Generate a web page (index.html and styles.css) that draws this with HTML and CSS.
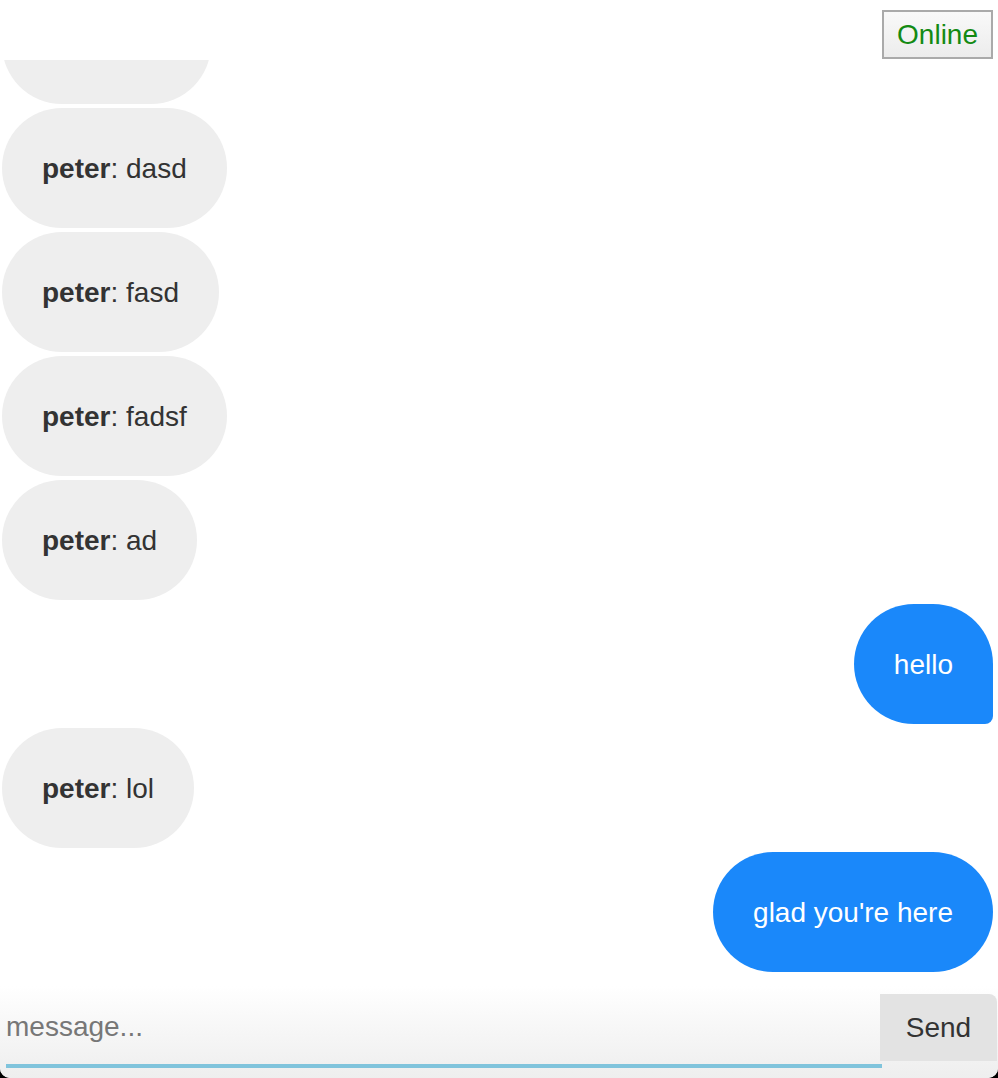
FILE: index.html
```html
<!DOCTYPE html>
<html lang="en">
<head>
<meta charset="utf-8">
<title>Chat</title>
<link rel="stylesheet" href="styles.css">
</head>
<body>
<div class="app">
  <header class="header">
    <div class="status">Online</div>
  </header>
  <main class="messages">
    <div class="msg msg-in"><b>peter</b>: asd</div>
    <div class="msg msg-in"><b>peter</b>: dasd</div>
    <div class="msg msg-in"><b>peter</b>: fasd</div>
    <div class="msg msg-in"><b>peter</b>: fadsf</div>
    <div class="msg msg-in"><b>peter</b>: ad</div>
    <div class="msg msg-out msg-tail">hello</div>
    <div class="msg msg-in"><b>peter</b>: lol</div>
    <div class="msg msg-out">glad you're here</div>
  </main>
  <footer class="composer">
    <input class="composer-input" type="text" placeholder="message...">
    <button class="composer-send" type="button">Send</button>
  </footer>
</div>
</body>
</html>
```

FILE: styles.css
```css
html, body {
  margin: 0;
  padding: 0;
  background: #000;
}

.app {
  width: 998px;
  height: 1078px;
  background: #fff;
  border-radius: 0 0 10px 10px;
  overflow: hidden;
  display: flex;
  flex-direction: column;
  font-family: "Liberation Sans", Arial, Helvetica, sans-serif;
}

.header {
  height: 60px;
  flex: none;
  display: flex;
  justify-content: flex-end;
  align-items: flex-start;
  padding: 10px 5px 0 0;
  box-sizing: border-box;
}

.status {
  height: 49px;
  box-sizing: border-box;
  border: 2px solid #aaa;
  background: linear-gradient(#f9f9f9, #ececec);
  color: #138a13;
  font-size: 28px;
  line-height: 46px;
  padding: 0 13px;
}

.messages {
  flex: 1;
  min-height: 0;
  overflow: hidden;
  display: flex;
  flex-direction: column;
  justify-content: flex-end;
  align-items: flex-start;
  gap: 4px;
  padding: 0 5px 4px 2px;
}

.msg {
  flex: none;
  font-size: 28px;
  line-height: 40px;
  padding: 41px 40px 39px;
  border-radius: 60px;
  white-space: nowrap;
}

.msg-in {
  background: #eeeeee;
  color: #333;
}

.msg-out {
  align-self: flex-end;
  background: #1a88fa;
  color: #fff;
}

.msg-tail {
  border-radius: 60px 60px 8px 60px;
}

.composer {
  flex: none;
  height: 102px;
  box-sizing: border-box;
  padding: 18px 1px 10px 6px;
  display: flex;
  align-items: flex-start;
  background: linear-gradient(#ffffff 10%, #f9f9f9 40%, #eeeeee 100%);
}

.composer-input {
  flex: 1;
  min-width: 0;
  height: 74px;
  box-sizing: border-box;
  margin: 0;
  padding: 0 0 4px 0;
  border: none;
  border-bottom: 4px solid #80c4dc;
  background: transparent;
  font-family: inherit;
  font-size: 28px;
  color: #333;
  outline: none;
}

.composer-input::placeholder {
  color: #777;
}

.composer-send {
  width: 117px;
  height: 67px;
  margin: 0 0 0 -2px;
  border: none;
  border-radius: 0 8px 0 0;
  background: #e3e3e3;
  color: #333;
  font-family: inherit;
  font-size: 28px;
  padding: 0;
}
```
